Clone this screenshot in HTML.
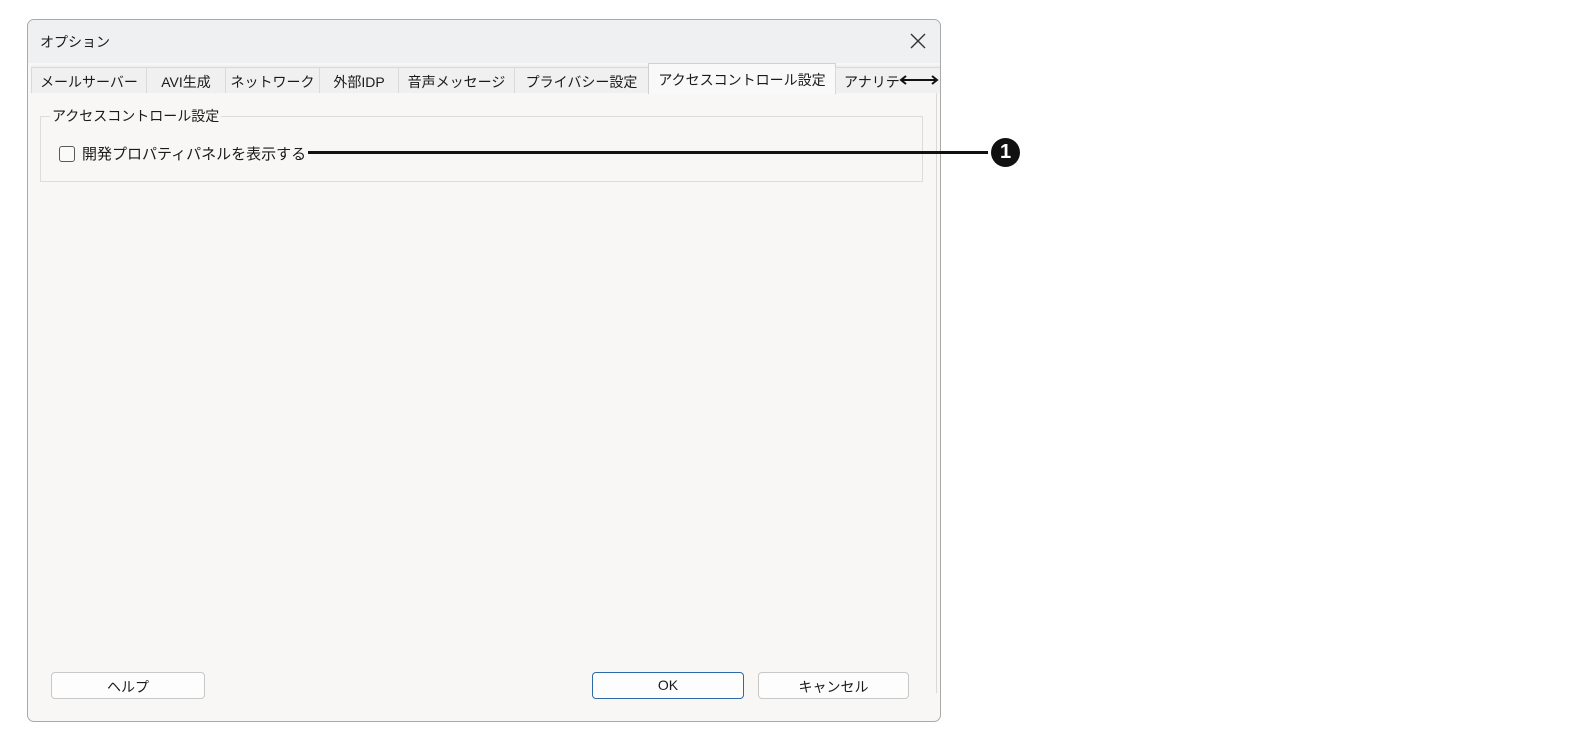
<!DOCTYPE html>
<html><head><meta charset="utf-8"><style>
*{box-sizing:border-box;margin:0;padding:0}
body{width:1594px;height:753px;background:#fff;position:relative;overflow:hidden;font-family:"Liberation Sans","Noto Sans CJK JP",sans-serif;font-size:14px;color:#1a1a1a}
.dlg{position:absolute;left:27px;top:19px;width:914px;height:703px;border:1px solid #a9a9a9;border-radius:7px;background:#f8f7f5;overflow:hidden}
.title{position:absolute;left:0;top:0;width:100%;height:43px;background:#eff0f2}
.title span{position:absolute;left:12px;top:12px;font-size:14px}
.x{position:absolute;left:880px;top:11px}
.tabs{position:absolute;left:3px;top:45px;height:28px;width:910px;background:#f0f0f0;border-bottom:1px solid #d9d9d9}
.tab{position:absolute;top:2px;height:26px;border:1px solid #d9d9d9;border-bottom:none;background:#f0f0f0;padding-top:4px;text-align:center;font-size:14px;white-space:nowrap;overflow:hidden}
.tab.act{top:-2px;height:31px;background:#f9f9f9;padding-top:6px;border-color:#d0d0d0}
.pane{position:absolute;left:3px;top:73px;width:906px;height:600px;border-right:1px solid #d9d9d9}
.grp{position:absolute;left:12px;top:96px;width:883px;height:66px;border:1px solid #dcdcdc}
.glbl{position:absolute;left:22px;top:86px;background:#f8f7f5;padding:0 2px;font-size:14px}
.cb{position:absolute;left:31px;top:126px;width:16px;height:16px;border:1px solid #5a5a5a;border-radius:3px;background:#fafafa}
.cbl{position:absolute;left:54px;top:123px;font-size:15px}
.btn{position:absolute;top:652px;height:27px;border:1px solid #c8c8c8;border-radius:4px;background:#fdfdfd;text-align:center;padding-top:4px;font-size:14px}
</style></head><body>
<div class="dlg">
 <div class="title"><span>オプション</span>
 <svg class="x" width="20" height="20" viewBox="0 0 20 20"><path d="M3 3L17 17M17 3L3 17" stroke="#333" stroke-width="1.4"/></svg></div>
 <div class="tabs">
  <div class="tab" style="left:0;width:116px">メールサーバー</div>
  <div class="tab" style="left:115px;width:80px">AVI生成</div>
  <div class="tab" style="left:194px;width:95px">ネットワーク</div>
  <div class="tab" style="left:288px;width:80px">外部IDP</div>
  <div class="tab" style="left:367px;width:117px">音声メッセージ</div>
  <div class="tab" style="left:483px;width:135px">プライバシー設定</div>
  <div class="tab act" style="left:617px;width:188px">アクセスコントロール設定</div>
  <div class="tab" style="left:804px;width:110px;text-align:left;padding-left:8px">アナリテ</div>
  <svg style="position:absolute;left:867px;top:8px" width="42" height="14" viewBox="0 0 42 14"><path d="M3 7H39M8 3L3 7L8 11M34 3L39 7L34 11" stroke="#111" stroke-width="2" fill="none"/></svg>
 </div>
 <div class="pane"></div>
 <div class="grp"></div>
 <div class="glbl">アクセスコントロール設定</div>
 <div class="cb"></div>
 <div class="cbl">開発プロパティパネルを表示する</div>
 <div class="btn" style="left:23px;width:154px">ヘルプ</div>
 <div class="btn" style="left:564px;width:152px;border-color:#2e6aa8">OK</div>
 <div class="btn" style="left:730px;width:151px">キャンセル</div>
</div>
<div style="position:absolute;left:308px;top:151px;width:680px;height:3px;background:#111"></div>
<div style="position:absolute;left:991px;top:138px;width:29px;height:29px;border-radius:50%;background:#111;color:#fff;font-weight:bold;font-size:20px;text-align:center;line-height:29px">1</div>
</body></html>
